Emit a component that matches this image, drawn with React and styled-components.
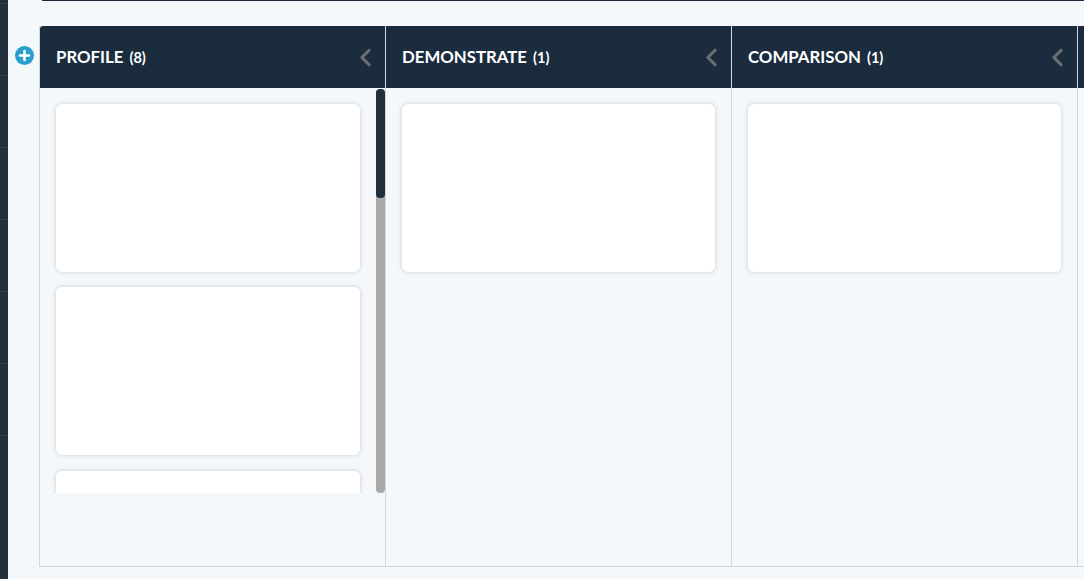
import React from "react";
import styled, { createGlobalStyle } from "styled-components";
import { LuChevronLeft } from "react-icons/lu";

const columns = [
  { name: "PROFILE", cards: 8 },
  { name: "DEMONSTRATE", cards: 1 },
  { name: "COMPARISON", cards: 1 },
  { name: "", cards: 0 },
];

const GlobalStyle = createGlobalStyle`
  html, body {
    margin: 0;
    height: 100%;
    overflow: hidden;
    background: #f4f8fb;
  }
  #root {
    height: 100%;
  }
`;

export default function App() {
  return (
    <>
      <GlobalStyle />
      <Page>
        <SideRail>
          {Array.from({ length: 7 }).map((_, n) => (
            <RailItem key={n} />
          ))}
        </SideRail>
        <Main>
          <TopRule />
          <Board>
            <AddButton>
              <svg width="19" height="19" viewBox="0 0 19 19">
                <circle cx="9.5" cy="9.5" r="9.5" fill="#2a9fcb" />
                <path d="M9.5 5v9M5 9.5h9" stroke="#fff" strokeWidth="2.6" strokeLinecap="round" />
              </svg>
            </AddButton>
            {columns.map((col, i) => (
              <Column key={i}>
                <ColumnHeader $first={i === 0}>
                  <ColumnTitle>
                    {col.name}
                    {col.cards > 0 && <Count>({col.cards})</Count>}
                  </ColumnTitle>
                  {col.name && (
                    <Collapse>
                      <LuChevronLeft size={29} strokeWidth={2.6} />
                    </Collapse>
                  )}
                </ColumnHeader>
                <ColumnBody>
                  <CardList>
                    {Array.from({ length: col.cards }).map((_, n) => (
                      <Card key={n} $narrow={i > 0} />
                    ))}
                  </CardList>
                  {col.cards > 3 && (
                    <ScrollTrack>
                      <ScrollThumb />
                    </ScrollTrack>
                  )}
                </ColumnBody>
              </Column>
            ))}
          </Board>
        </Main>
      </Page>
    </>
  );
}

const Page = styled.div`
  display: flex;
  height: 579px;
  width: 1084px;
  overflow: hidden;
  font-family: "Lato", "Liberation Sans", sans-serif;
`;

const SideRail = styled.div`
  flex: 0 0 8px;
  background: #24313d;
  display: flex;
  flex-direction: column;
`;

const RailItem = styled.div`
  height: 72px;
  box-sizing: border-box;
  border-bottom: 1px solid #2d3d4f;

  &:first-child {
    height: 4px;
  }
`;

const Main = styled.div`
  flex: 1;
  min-width: 0;
  padding-left: 31px;
`;

const TopRule = styled.div`
  height: 1px;
  margin-left: 3px;
  background: #1b2b3d;
`;

const Board = styled.div`
  position: relative;
  display: flex;
  margin-top: 25px;
  height: 540px;
  border-left: 1px solid #d3d6da;
  border-bottom: 1px solid #d3d6da;
`;

const AddButton = styled.div`
  position: absolute;
  left: -25px;
  top: 20px;
  width: 19px;
  height: 19px;
  line-height: 0;
`;

const Column = styled.div`
  flex: 0 0 346px;
  display: flex;
  flex-direction: column;
  border-right: 1px solid #d3d6da;
  box-sizing: border-box;
`;

const ColumnHeader = styled.div`
  height: 62px;
  flex: none;
  display: flex;
  align-items: center;
  justify-content: space-between;
  padding: 0 5px 0 16px;
  background: #1b2c3f;
  border-top-left-radius: ${(p) => (p.$first ? "3px" : "0")};
  margin-right: -1px;
  border-right: 1px solid #d3d6da;
`;

const ColumnTitle = styled.div`
  display: flex;
  align-items: baseline;
  gap: 6px;
  margin-top: -2px;
  color: #fff;
  font-size: 16.8px;
  font-weight: 700;
`;

const Count = styled.span`
  font-size: 14.5px;
`;

const Collapse = styled.span`
  display: flex;
  color: #6b6f72;
`;

const ColumnBody = styled.div`
  position: relative;
  flex: 1;
  min-height: 0;
`;

const CardList = styled.div`
  height: 405px;
  overflow: hidden;
  box-sizing: border-box;
  padding: 16px 0 0 16px;
  display: flex;
  flex-direction: column;
  gap: 15.4px;
`;

const Card = styled.div`
  flex: none;
  width: ${(p) => (p.$narrow ? "313px" : "304px")};
  height: 168px;
  background: #fff;
  border-radius: 6px;
  box-shadow: 0 0 4px rgba(60, 70, 85, 0.25);
`;

const ScrollTrack = styled.div`
  position: absolute;
  top: 1px;
  right: 0;
  width: 9px;
  height: 404px;
  background: #a9a9a9;
  border-radius: 4px;
`;

const ScrollThumb = styled.div`
  height: 109px;
  background: #212e3b;
  border-radius: 4px;
`;
